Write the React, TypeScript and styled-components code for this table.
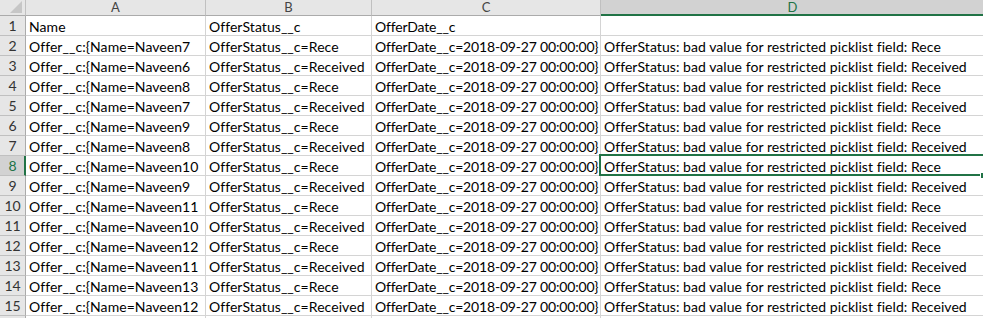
import React from "react";
import styled, { createGlobalStyle, css } from "styled-components";

const Global = createGlobalStyle`
  html, body { margin: 0; padding: 0; background: #ffffff; overflow: hidden; }
  body { font-family: "Lato", "Liberation Sans", sans-serif; }
`;

const GREEN = "#217346";
const GRID = "#d4d4d4";
const HEAD_BG = "#e6e6e6";
const HEAD_SEL = "#d2d2d2";
const HEAD_LINE = "#c0c0c0";

const COLS = [26, 180, 166, 229, 384];

const Sheet = styled.div`
  display: grid;
  grid-template-columns: ${COLS.map((c) => c + "px").join(" ")};
  grid-auto-rows: 20px;
  grid-template-rows: 16px;
  width: 985px;
  font-family: "Lato", "Liberation Sans", sans-serif;
  font-size: 14px;
  color: #000;
`;

const Corner = styled.div`
  background: ${HEAD_BG};
  border-right: 1px solid ${HEAD_LINE};
  border-bottom: 1px solid #ababab;
  box-sizing: border-box;
  display: flex;
  align-items: flex-end;
  justify-content: flex-end;
  padding: 0 3px 2px 0;
`;

const ColHead = styled.div<{ $sel?: boolean }>`
  background: ${(p) => (p.$sel ? HEAD_SEL : HEAD_BG)};
  color: ${(p) => (p.$sel ? GREEN : "#444")};
  border-right: 1px solid ${HEAD_LINE};
  border-bottom: ${(p) => (p.$sel ? `2px solid ${GREEN}` : "1px solid #ababab")};
  box-sizing: border-box;
  display: flex;
  align-items: center;
  justify-content: center;
  font-size: 13px;
  line-height: 1;
  padding-top: ${(p) => (p.$sel ? 1 : 0)}px;
`;

const RowHead = styled.div<{ $sel?: boolean }>`
  background: ${(p) => (p.$sel ? HEAD_SEL : HEAD_BG)};
  color: ${(p) => (p.$sel ? GREEN : "#333")};
  border-right: ${(p) => (p.$sel ? `2px solid ${GREEN}` : `1px solid #ababab`)};
  border-bottom: 1px solid ${HEAD_LINE};
  box-sizing: border-box;
  display: flex;
  align-items: center;
  justify-content: center;
  font-size: 14px;
  padding-left: ${(p) => (p.$sel ? 1 : 0)}px;
`;

const Cell = styled.div<{ $active?: boolean; $tight?: boolean }>`
  position: relative;
  border-right: 1px solid ${GRID};
  border-bottom: 1px solid ${GRID};
  box-sizing: border-box;
  display: flex;
  align-items: center;
  padding: 1px 0 0 3px;
  white-space: nowrap;
  overflow: visible;
  letter-spacing: ${(p) => (p.$tight ? "-0.18px" : "0.06px")};
  ${(p) =>
    p.$active &&
    css`
      &::after {
        content: "";
        position: absolute;
        left: -2px;
        top: -2px;
        right: -1px;
        bottom: -1px;
        border: 2px solid ${GREEN};
        pointer-events: none;
      }
    `}
`;

const FillHandle = styled.span`
  position: absolute;
  right: -3px;
  bottom: -4px;
  width: 5px;
  height: 5px;
  background: ${GREEN};
  border: 1px solid #fff;
  z-index: 2;
`;

const CornerMark = () => (
  <svg width="12" height="12" viewBox="0 0 12 12">
    <polygon points="12,0 12,12 0,12" fill="#c6c6c6" />
  </svg>
);

const data: [string, string][] = [
  ["Naveen7", "Rece"],
  ["Naveen6", "Received"],
  ["Naveen8", "Rece"],
  ["Naveen7", "Received"],
  ["Naveen9", "Rece"],
  ["Naveen8", "Received"],
  ["Naveen10", "Rece"],
  ["Naveen9", "Received"],
  ["Naveen11", "Rece"],
  ["Naveen10", "Received"],
  ["Naveen12", "Rece"],
  ["Naveen11", "Received"],
  ["Naveen13", "Rece"],
  ["Naveen12", "Received"],
];

export default function App() {
  const letters = ["A", "B", "C", "D"];
  return (
    <>
      <Global />
      <Sheet>
        <Corner>
          <CornerMark />
        </Corner>
        {letters.map((l) => (
          <ColHead key={l} $sel={l === "D"}>
            {l}
          </ColHead>
        ))}

        <RowHead>1</RowHead>
        <Cell>Name</Cell>
        <Cell>OfferStatus__c</Cell>
        <Cell $tight>OfferDate__c</Cell>
        <Cell />

        {data.map(([name, status], i) => {
          const row = i + 2;
          const active = row === 8;
          return (
            <React.Fragment key={row}>
              <RowHead $sel={active}>{row}</RowHead>
              <Cell>{`Offer__c:{Name=${name}`}</Cell>
              <Cell>{`OfferStatus__c=${status}`}</Cell>
              <Cell $tight>OfferDate__c=2018-09-27 00:00:00&#125;</Cell>
              <Cell $active={active}>
                {`OfferStatus: bad value for restricted picklist field: ${status}`}
                {active && <FillHandle />}
              </Cell>
            </React.Fragment>
          );
        })}

        <RowHead />
        <Cell />
        <Cell />
        <Cell />
        <Cell />
      </Sheet>
    </>
  );
}
